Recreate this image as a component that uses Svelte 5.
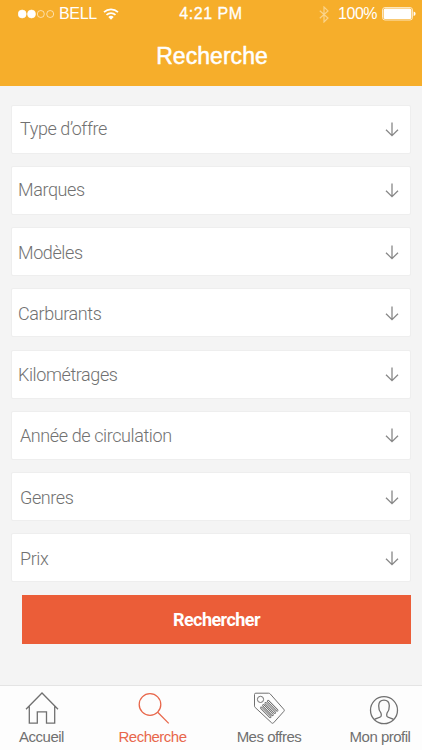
<script lang="ts">
	const fields = [
		{ id: 'offer', label: 'Type d’offre' },
		{ id: 'brand', label: 'Marques' },
		{ id: 'model', label: 'Modèles' },
		{ id: 'fuel', label: 'Carburants' },
		{ id: 'mileage', label: 'Kilométrages' },
		{ id: 'year', label: 'Année de circulation' },
		{ id: 'kind', label: 'Genres' },
		{ id: 'price', label: 'Prix' }
	];

	let active = $state('search');
</script>

<div class="screen">
	<header>
		<div class="status">
			<div class="carrier">
				<svg class="signal" width="37" height="10" viewBox="0 0 37 10">
					<circle cx="4.2" cy="5" r="4" fill="#fff" />
					<circle cx="13.5" cy="5" r="4" fill="#fff" />
					<circle cx="22.8" cy="5" r="3.5" />
					<circle cx="32.2" cy="5" r="3.5" />
				</svg>
				<span class="network">BELL</span>
				<svg class="wifi" width="16" height="12" viewBox="0 0 16 12">
					<path d="M1 4.2a10.3 10.3 0 0 1 14 0M3.5 6.9a6.7 6.7 0 0 1 9 0" />
					<path class="dot" d="M5.3 9a4 4 0 0 1 5.4 0L8 11.8z" />
				</svg>
			</div>
			<time>4:21 PM</time>
			<div class="power">
				<svg class="bluetooth" width="10" height="17" viewBox="0 0 10 17">
					<path d="M.8 4.8 9 12 5 16V1l4 3.9L.8 12.2" />
				</svg>
				<span class="percent">100%</span>
				<svg width="34" height="14" viewBox="0 0 34 14">
					<rect class="shell" x=".5" y=".5" width="30" height="12.5" rx="2.5" />
					<rect x="1.6" y="1.6" width="27.8" height="10.3" rx="1.5" fill="#fff" />
					<path d="M31.6 4.5q2 .6 2 2.3t-2 2.3z" fill="#fff" />
				</svg>
			</div>
		</div>
		<h1>Recherche</h1>
	</header>

	<main>
		{#each fields as field (field.id)}
			<button class="field {field.id}">
				<span>{field.label}</span>
				<svg width="14" height="15" viewBox="0 0 14 15">
					<path d="M7 .5v13M1 7.7l6 6 6-6" />
				</svg>
			</button>
		{/each}
		<button class="submit">Rechercher</button>
	</main>

	<nav>
		<button class="home" class:active={active === 'home'} onclick={() => (active = 'home')}>
			<svg width="36" height="36" viewBox="0 0 36 36">
				<path d="M2 19.2 18 3l16 16.2M5.3 16.4v16.8h8V21.8h9.2v11.4h8.2V16.4" />
			</svg>
			<span>Accueil</span>
		</button>
		<button class="search" class:active={active === 'search'} onclick={() => (active = 'search')}>
			<svg width="36" height="36" viewBox="0 0 36 36">
				<circle cx="14" cy="14.5" r="10.8" />
				<path d="m21.7 22.2 11 11.2" />
			</svg>
			<span>Recherche</span>
		</button>
		<button class="offers" class:active={active === 'offers'} onclick={() => (active = 'offers')}>
			<svg width="36" height="36" viewBox="0 0 36 36">
				<path d="M3.5 4.5q0-1.3 1.3-1.3h12.7q1 0 1.7.7l13.6 15.4q1 1.1 0 2.1L22.6 32.8q-1 1-2 0L4.2 17.5q-.7-.7-.7-1.6z" />
				<circle cx="9.5" cy="9.4" r="3.1" />
				<g class="lines">
					<path d="m17.1 11.1 9 9.3M14.8 13.3l9 9.3M12.5 15.5l9 9.3M10.3 17.8l8.9 9.1" />
				</g>
				<g class="gaps">
					<path d="m17.1 11.1 9 9.3M14.8 13.3l9 9.3M12.5 15.5l9 9.3M10.3 17.8l8.9 9.1" />
				</g>
			</svg>
			<span>Mes offres</span>
		</button>
		<button class="profile" class:active={active === 'profile'} onclick={() => (active = 'profile')}>
			<svg width="36" height="36" viewBox="0 0 36 36">
				<circle cx="18" cy="20.2" r="13.5" />
				<path d="M8.4 29.6c1.4-1.4 5.4-1.5 6.6-3.2.6-.9.3-2.3 0-3.2-1.7-2-2.4-4.6-2.3-7.4.1-3.6 1.9-5.7 5.3-5.7s5.2 2.1 5.3 5.7c.1 2.8-.6 5.4-2.3 7.4-.3.9-.6 2.3 0 3.2 1.2 1.7 5.2 1.8 6.6 3.2" />
			</svg>
			<span>Mon profil</span>
		</button>
	</nav>
</div>

<style>
	:global(body) {
		margin: 0;
		background: #f4f4f4;
	}

	.screen {
		display: flex;
		flex-direction: column;
		height: 750px;
		overflow: hidden;
		background: #f4f4f4;
		font-family: 'Liberation Sans', Arial, sans-serif;
	}

	button {
		font: inherit;
		border: 0;
		padding: 0;
		cursor: pointer;
	}

	svg {
		display: block;
		flex: none;
		fill: none;
	}

	header {
		height: 86px;
		flex: none;
		background: #f6ae2b;
		color: #fff;
	}

	.status {
		display: grid;
		grid-template-columns: 1fr auto 1fr;
		align-items: center;
		height: 28px;
		padding: 0 6px 0 18px;
		font-size: 16px;
		line-height: 28px;
	}

	.carrier,
	.power {
		display: flex;
		align-items: center;
	}

	.signal {
		stroke: #fff;
		stroke-width: 0.6;
	}

	.network {
		margin: 0 6px 0 4px;
		letter-spacing: -0.35px;
	}

	.wifi {
		stroke: #fff;
		stroke-width: 1.7;
	}

	.wifi .dot {
		fill: #fff;
		stroke: none;
	}

	time {
		font-size: 16px;
		letter-spacing: 0.55px;
		-webkit-text-stroke: 0.3px #fff;
		transform: translateX(-6px);
	}

	.power {
		justify-content: flex-end;
	}

	.bluetooth {
		stroke: #fad38a;
		stroke-width: 1.2;
	}

	.percent {
		margin: 0 5px 0 9px;
		letter-spacing: -0.5px;
	}

	.shell {
		stroke: #fff;
		stroke-opacity: 0.7;
	}

	h1 {
		margin: 13px 0 0;
		padding-left: 2px;
		font-size: 23px;
		line-height: 30px;
		font-weight: 400;
		letter-spacing: 0.05px;
		text-align: center;
		-webkit-text-stroke: 0.5px #fff;
	}

	main {
		flex: 1;
		display: flex;
		flex-direction: column;
		gap: 12.25px;
		padding: 18.7px 11px 0;
	}

	.field {
		display: flex;
		justify-content: space-between;
		align-items: center;
		box-sizing: border-box;
		height: 49px;
		padding: 1px 11px 0 6px;
		border: 1px solid #eee;
		border-radius: 2px;
		background: #fff;
		color: #717171;
		font-family: Roboto, sans-serif;
		font-size: 18px;
		font-weight: 300;
		letter-spacing: -0.4px;
	}

	.offer,
	.year,
	.kind,
	.price {
		padding-left: 8px;
	}

	.offer span,
	.brand span {
		margin-bottom: 3px;
	}

	.field svg {
		stroke: #888;
		stroke-width: 1.3;
	}

	.submit {
		height: 49px;
		margin-left: 11px;
		background: #eb5d38;
		color: #fff;
		font-family: Roboto, sans-serif;
		font-size: 18px;
		font-weight: 700;
		letter-spacing: -0.55px;
	}

	nav {
		flex: none;
		display: grid;
		grid-template-columns: 83px 139px 94px 106px;
		box-sizing: border-box;
		height: 65px;
		padding-top: 4px;
		border-top: 1px solid #e4e4e4;
		background: #fdfdfd;
	}

	nav button {
		display: flex;
		flex-direction: column;
		align-items: center;
		background: none;
		color: #707070;
		font-size: 15px;
		line-height: 22px;
		letter-spacing: -0.5px;
		white-space: nowrap;
	}

	nav svg {
		stroke: currentColor;
		stroke-width: 1.3;
	}

	nav .active {
		color: #e8674b;
	}

	.search svg {
		margin-left: 2px;
	}

	.offers svg {
		stroke-width: 1;
	}

	.lines {
		stroke-width: 2.6;
		stroke-linecap: round;
	}

	.gaps {
		stroke: #fdfdfd;
		stroke-width: 1;
		stroke-linecap: round;
	}

	.profile {
		padding-left: 22px;
	}

	.profile svg {
		margin-left: 8px;
	}
</style>
